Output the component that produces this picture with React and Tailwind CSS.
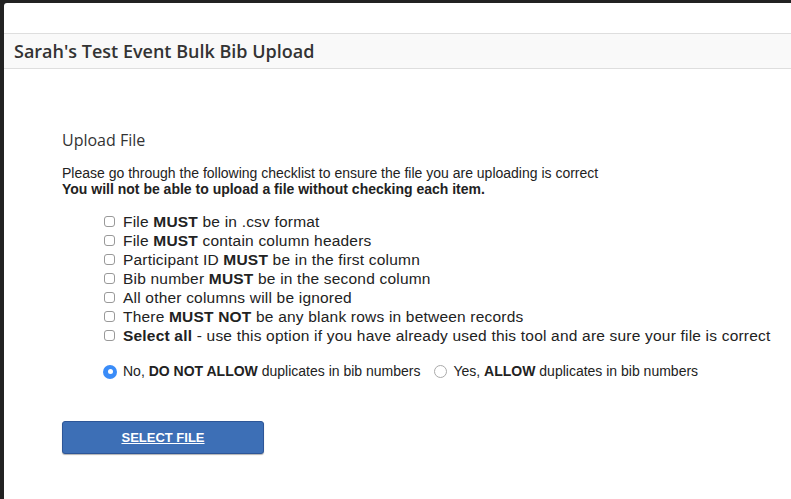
export default function App() {
    const items = [
        <>File <b>MUST</b> be in .csv format</>,
        <>File <b>MUST</b> contain column headers</>,
        <>Participant ID <b>MUST</b> be in the first column</>,
        <>Bib number <b>MUST</b> be in the second column</>,
        <>All other columns will be ignored</>,
        <>There <b>MUST NOT</b> be any blank rows in between records</>,
        <><b>Select all</b> - use this option if you have already used this tool and are sure your file is correct</>,
    ];

    return (
        <div className="w-[791px] h-[499px] bg-[#222] pt-[3px] pl-[4px] overflow-hidden">
            <div className="h-full bg-white rounded-tl-[3px] overflow-hidden">
                <div className="h-[30px]" />
                <div className="h-[36px] bg-[#f9f9f9] border-y border-[#dedede] flex items-center pl-[10px]">
                    <h1 className="text-[18px] font-semibold text-[#333] font-['Open_Sans',sans-serif]">
                        Sarah's Test Event Bulk Bib Upload
                    </h1>
                </div>

                <div className="pl-[58px] pt-[60px] text-[#222] font-['Liberation_Sans',Arial,sans-serif]">
                    <h2 className="text-[16px] text-[#333] font-['Open_Sans',sans-serif] leading-[22px]">Upload File</h2>

                    <div className="mt-[14px] text-[14px] leading-[16px]">
                        <p>Please go through the following checklist to ensure the file you are uploading is correct</p>
                        <p className="font-bold">You will not be able to upload a file without checking each item.</p>
                    </div>

                    <ul className="mt-[15px] pl-[42px] text-[15.5px] tracking-[0.2px] leading-[19px]">
                        {items.map((item, i) => (
                            <li key={i} className="flex items-center">
                                <span className="w-[11px] h-[11px] mr-[8px] border border-[#999] rounded-[3px] bg-white shrink-0" />
                                <span>{item}</span>
                            </li>
                        ))}
                    </ul>

                    <div className="mt-[16px] pl-[41px] flex items-center text-[14px]">
                        <span className="w-[14px] h-[14px] rounded-full bg-[#3a8cf8] flex items-center justify-center mr-[6px]">
                            <span className="w-[5px] h-[5px] rounded-full bg-white" />
                        </span>
                        <span>No, <b>DO NOT ALLOW</b> duplicates in bib numbers</span>
                        <span className="w-[13px] h-[13px] rounded-full border border-[#aaa] bg-white ml-[14px] mr-[6px]" />
                        <span>Yes, <b>ALLOW</b> duplicates in bib numbers</span>
                    </div>

                    <button className="mt-[39px] w-[202px] h-[33px] bg-[#3d6fb6] border border-[#2d5698] rounded-[3px] text-white text-[13px] font-bold underline shadow-[0_1px_1px_rgba(0,0,0,0.3)]">
                        SELECT FILE
                    </button>
                </div>
            </div>
        </div>
    );
}
